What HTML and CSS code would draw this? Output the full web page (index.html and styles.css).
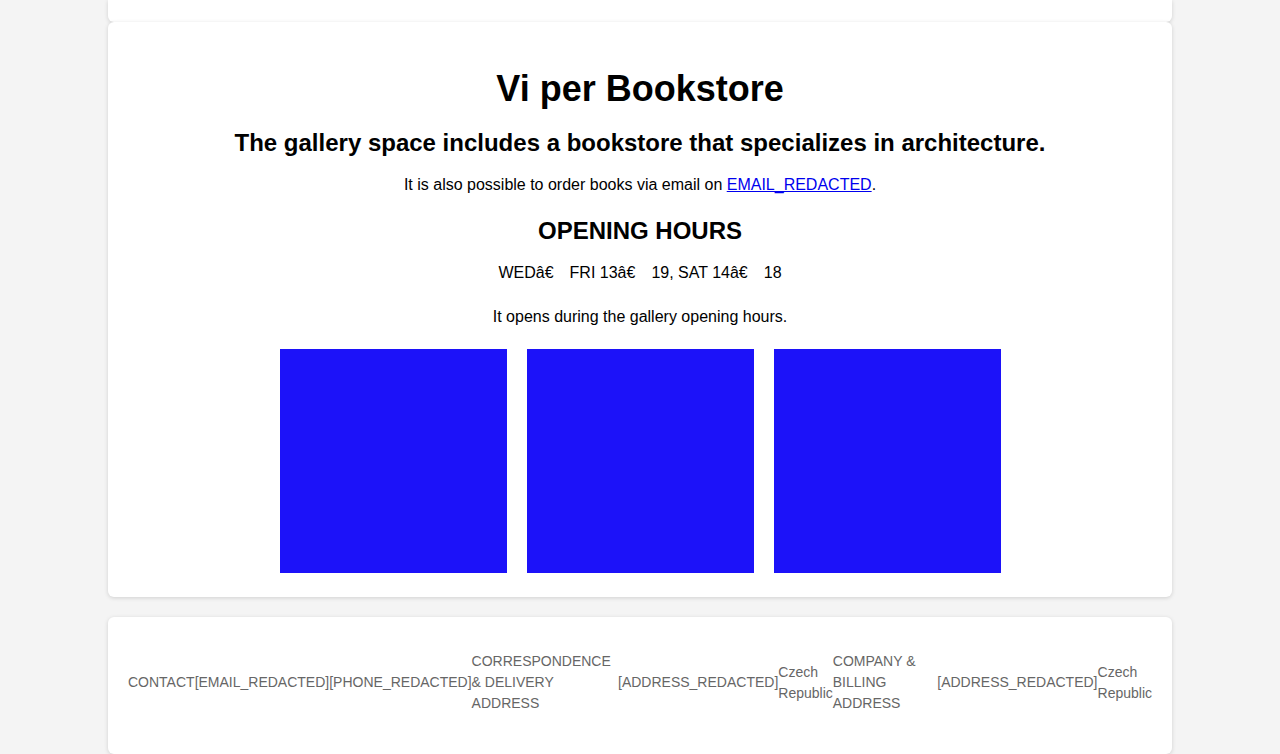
FILE: index.html
```html
<!DOCTYPE html>
<html>
<head>
    <title>Vi per Bookstore</title>
    <link rel="stylesheet" href="styles.css">
</head>
<body>
    <div class="page">
        <div class="card card-top"></div>

        <main class="card bookstore">
            <h1>Vi per Bookstore</h1>
            <h2>The gallery space includes a bookstore that specializes in architecture.</h2>
            <p class="note">It is also possible to order books via email on <a href="#">EMAIL_REDACTED</a>.</p>

            <h3>OPENING HOURS</h3>
            <p class="hours">WEDâ€<span class="dash"></span>FRI 13â€<span class="dash"></span>19, SAT 14â€<span class="dash"></span>18</p>
            <p class="opens">It opens during the gallery opening hours.</p>

            <div class="gallery">
                <div class="photo"></div>
                <div class="photo"></div>
                <div class="photo"></div>
            </div>
        </main>

        <footer class="card footer">
            <span class="item">CONTACT</span>
            <span class="item">[EMAIL_REDACTED]</span>
            <span class="item">[PHONE_REDACTED]</span>
            <span class="item">CORRESPONDENCE &amp; DELIVERY ADDRESS</span>
            <span class="item">[ADDRESS_REDACTED]</span>
            <span class="item">Czech Republic</span>
            <span class="item">COMPANY &amp; BILLING ADDRESS</span>
            <span class="item">[ADDRESS_REDACTED]</span>
            <span class="item">Czech Republic</span>
        </footer>
    </div>
</body>
</html>
```

FILE: styles.css
```css
body {
    margin: 0;
    background-color: #f4f4f4;
    font-family: "Liberation Sans", Arial, sans-serif;
    color: #000;
}

.page {
    width: 1064px;
    margin: 0 auto;
}

.card {
    background-color: #fff;
    border-radius: 6px;
    box-shadow: 0 1px 4px rgba(0, 0, 0, 0.15);
}

.card-top {
    height: 22px;
    border-radius: 0 0 6px 6px;
}

.bookstore {
    padding: 46px 20px 24px;
    text-align: center;
}

h1 {
    font-size: 36px;
    margin: 0 0 19px;
}

h2 {
    font-size: 24px;
    margin: 0 0 19px;
}

h3 {
    font-size: 24px;
    margin: 0 0 19px;
}

p {
    font-size: 16px;
    margin: 0;
}

.note {
    margin-bottom: 23px;
}

.note a {
    color: #0000ee;
}

.hours {
    margin-bottom: 26px;
}

.hours .dash {
    display: inline-block;
    width: 16px;
}

.opens {
    margin-bottom: 23px;
}

.gallery {
    display: flex;
    justify-content: center;
    gap: 20px;
}

.photo {
    width: 227px;
    height: 224px;
    background-color: #1c12f9;
}

.footer {
    margin-top: 20px;
    padding: 34px 20px 40px;
    display: flex;
    align-items: center;
    font-size: 14px;
    line-height: 21px;
    color: #666;
}
```
